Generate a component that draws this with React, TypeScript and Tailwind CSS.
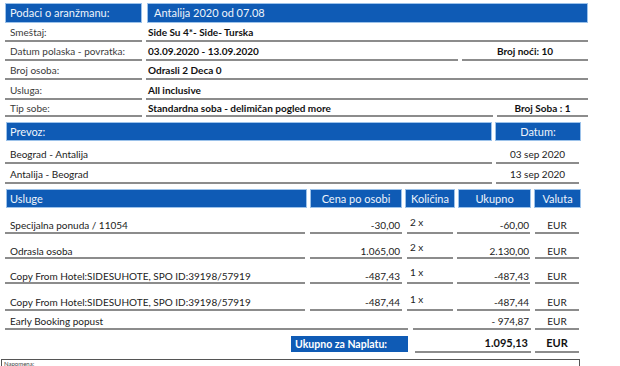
const head = "bg-[#0f5bb5] border border-[#9cc2ea] text-[#eef4fb] text-[11px] leading-[18px] flex items-center";
const line = "border-b-2 border-[#8c8c8c] flex items-end leading-[12px]";

function Top({ label, value, right, mid, bold = true, pb = "pb-[2px]", h }: {
  label: string; value: string; right?: string; mid?: string; bold?: boolean; pb?: string; h: string;
}) {
  return (
    <div className={`flex gap-[4px] ${h}`}>
      <div className={`${line} w-[137px] pl-[5px] text-[#3a3a3a] ${pb}`}>{label}</div>
      <div className={`${line} ${mid ?? "flex-1"} pl-[2px] ${pb} ${bold ? "font-bold text-[#111]" : ""}`}>{value}</div>
      {right && (
        <div className={`${line} flex-1 justify-center font-bold text-[#111] ${pb}`}>{right}</div>
      )}
    </div>
  );
}

type Item = { name: string; cena: string; kol: string; ukupno: string; h: string; pb: string };

const items: Item[] = [
  { name: "Specijalna ponuda / 11054", cena: "-30,00", kol: "2 x", ukupno: "-60,00", h: "h-[26px]", pb: "pb-[1px]" },
  { name: "Odrasla osoba", cena: "1.065,00", kol: "2 x", ukupno: "2.130,00", h: "h-[25px]", pb: "pb-[0px]" },
  { name: "Copy From Hotel:SIDESUHOTE, SPO ID:39198/57919", cena: "-487,43", kol: "1 x", ukupno: "-487,43", h: "h-[25px]", pb: "pb-[0px]" },
  { name: "Copy From Hotel:SIDESUHOTE, SPO ID:39198/57919", cena: "-487,44", kol: "1 x", ukupno: "-487,44", h: "h-[27px]", pb: "pb-[1px]" },
];

export default function App() {
  return (
    <div className="w-[620px] h-[366px] bg-white overflow-hidden relative font-['Lato','Liberation_Sans',sans-serif] text-[10px] text-[#222]">
      <div className="pt-[3px] pl-[5px] w-[588px]">
        {/* podaci o aranzmanu */}
        <div className="flex gap-[5px] h-[20px]">
          <div className={`${head} w-[137px] pl-[4px]`}>Podaci o aranžmanu:</div>
          <div className={`${head} flex-1 pl-[6px]`}>Antalija 2020 od 07.08</div>
        </div>
        <Top h="h-[19px]" label="Smeštaj:" value="Side Su 4*- Side- Turska" />
        <Top h="h-[19px]" label="Datum polaska - povratka:" value="03.09.2020 - 13.09.2020" mid="w-[312px]" right="Broj noći: 10" />
        <Top h="h-[19px]" label="Broj osoba:" value="Odrasli 2 Deca 0" />
        <Top h="h-[20px]" label="Usluga:" value="All inclusive" />
        <Top h="h-[17px]" label="Tip sobe:" value="Standardna soba - delimičan pogled more" mid="w-[347px]" right="Broj Soba : 1" pb="pb-[1px]" />

        {/* prevoz */}
        <div className="flex gap-[3px] h-[19px] mt-[5px]">
          <div className={`${head} w-[486px] pl-[3px] ml-[1px]`}>Prevoz:</div>
          <div className={`${head} w-[86px] justify-center`}>Datum:</div>
        </div>
        {[["Beograd - Antalija", "03 sep 2020", "h-[23px]"], ["Antalija - Beograd", "13 sep 2020", "h-[20px]"]].map(([a, d, h]) => (
          <div key={a} className={`flex gap-[4px] ${h}`}>
            <div className={`${line} w-[487px] pl-[5px] pb-[2px] text-[#222]`}>{a}</div>
            <div className={`${line} w-[83px] justify-center pb-[2px]`}>{d}</div>
          </div>
        ))}

        {/* usluge */}
        <div className="flex gap-[3px] h-[19px] mt-[5px] ml-[1px] text-center">
          <div className={`${head} w-[301px] pl-[3px]`}>Usluge</div>
          <div className={`${head} w-[92px] justify-center`}>Cena po osobi</div>
          <div className={`${head} w-[50px] justify-center`}>Količina</div>
          <div className={`${head} w-[73px] justify-center`}>Ukupno</div>
          <div className={`${head} w-[47px] justify-center`}>Valuta</div>
        </div>
        {items.map((it, i) => (
          <div key={i} className={`flex ${it.h}`}>
            <div className={`${line} w-[300px] pl-[5px] ${it.pb}`}>{it.name}</div>
            <div className={`${line} w-[92px] ml-[5px] justify-end pr-[2px] ${it.pb}`}>{it.cena}</div>
            <div className={`${line} w-[46px] ml-[5px] pl-[3px] pb-[4px]`}>{it.kol}</div>
            <div className={`${line} w-[73px] ml-[4px] justify-end pr-[1px] ${it.pb}`}>{it.ukupno}</div>
            <div className={`${line} w-[44px] ml-[5px] justify-center ${it.pb}`}>EUR</div>
          </div>
        ))}
        <div className="flex h-[19px]">
          <div className={`${line} w-[403px] pl-[5px] pb-[1px]`}>Early Booking popust</div>
          <div className={`${line} w-[118px] ml-[5px] justify-end pr-[2px] pb-[1px]`}>- 974,87</div>
          <div className={`${line} w-[44px] ml-[4px] justify-center pb-[1px]`}>EUR</div>
        </div>

        {/* ukupno */}
        <div className="flex h-[23px] items-end">
          <div className="w-[286px]" />
          <div className="w-[117px] h-[16px] mb-[1px] bg-[#0f5bb5] text-white font-bold text-[10.5px] leading-[16px] pl-[4px]">
            Ukupno za Naplatu:
          </div>
          <div className={`${line} w-[116px] h-[18px] ml-[7px] justify-end pr-[3px] pb-[2px] font-bold text-[11px] text-[#111]`}>1.095,13</div>
          <div className={`${line} w-[44px] h-[18px] ml-[4px] justify-center pb-[2px] font-bold text-[11px] text-[#111]`}>EUR</div>
        </div>
      </div>

      {/* napomena */}
      <div className="absolute left-[1px] top-[359px] w-[579px] h-[20px] border border-[#555] text-[6px] leading-[8px] pl-[2px] text-[#444]">
        Napomena:
      </div>
    </div>
  );
}
